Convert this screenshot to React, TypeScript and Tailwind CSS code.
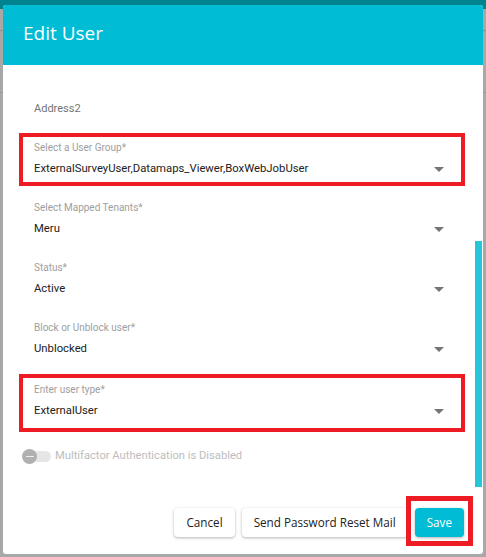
import { ReactNode } from "react"

const FIELDS = [
  { label: "Select a User Group*", value: "ExternalSurveyUser,Datamaps_Viewer,BoxWebJobUser", highlight: "group" },
  { label: "Select Mapped Tenants*", value: "Meru" },
  { label: "Status*", value: "Active" },
  { label: "Block or Unblock user*", value: "Unblocked" },
  { label: "Enter user type*", value: "ExternalUser", highlight: "type" },
]

function Arrow() {
  return (
    <svg width="10" height="5" viewBox="0 0 10 5" className="absolute right-[17px] top-[28px]">
      <path d="M0 0 L10 0 L5 5 Z" fill="#757575" />
    </svg>
  )
}

function SelectField({ label, value, highlight }: { label: string; value: string; highlight?: string }) {
  return (
    <div className={`relative h-[60px] pt-[1px] ${highlight === "type" ? "mt-[2px]" : ""}`}>
      {highlight === "group" && (
        <div className="absolute -left-[15px] -right-[4px] -top-[6px] h-[53px] border-[4px] border-[#ed1c24]" />
      )}
      {highlight === "type" && (
        <div className="absolute -left-[15px] -right-[4px] -top-[7px] h-[58px] border-[4px] border-[#ed1c24]" />
      )}
      <div className="h-[15px] text-[10px] leading-[15px] text-[#9e9e9e]">{label}</div>
      <div className="mt-[4px] h-[20px] text-[11.3px] leading-[20px] text-[#212121]">{value}</div>
      <Arrow />
    </div>
  )
}

function Button({ children, primary }: { children: ReactNode; primary?: boolean }) {
  return (
    <button
      className={`h-[29px] rounded-[4px] px-[12px] text-[11.7px] shadow-[0_1px_3px_rgba(0,0,0,0.3)] ${
        primary ? "bg-[#00bcd4] text-white" : "bg-white text-[#212121]"
      }`}
      style={{ fontFamily: "'Open Sans', sans-serif" }}
    >
      {children}
    </button>
  )
}

export default function App() {
  return (
    <div className="relative h-[557px] w-[486px] overflow-hidden bg-[#a8a8a8]" style={{ fontFamily: "Roboto, sans-serif" }}>
      {/* page behind the overlay */}
      <div className="h-[9px] bg-[#00838f]" />
      <div className="mt-[21px] h-[1px] bg-[#8f8f8f]" />
      <div className="mt-[61px] h-[1px] bg-[#9a9a9a]" />

      {/* dialog */}
      <div className="absolute left-[3px] top-[5px] flex h-[549px] w-[480px] flex-col overflow-hidden rounded-[3px] bg-white">
        <div className="flex h-[60px] shrink-0 items-center bg-[#00bcd4] pb-[4px] pl-[20px]">
          <h1 className="text-[19px] text-white" style={{ fontFamily: "'Open Sans', sans-serif" }}>
            Edit User
          </h1>
        </div>

        <div className="relative flex-1">
          <div className="pl-[31px] pr-[22px] pt-[34px]">
            <div className="h-[20px] text-[11px] leading-[20px] text-[#757575]">Address2</div>
            <div className="mt-[20px]">
              {FIELDS.map((f) => (
                <SelectField key={f.label} {...f} />
              ))}
            </div>

            <div className="mt-[7px] flex items-center gap-[3px] -ml-[12px]">
              <div className="relative h-[15px] w-[30px]">
                <div className="absolute left-[4px] top-[2px] h-[11px] w-[25px] rounded-full bg-[#e6e6e6]" />
                <div className="absolute left-0 top-0 flex h-[15px] w-[15px] items-center justify-center rounded-full bg-[#b0b0b0]">
                  <div className="h-[1px] w-[8px] bg-[#eeeeee]" />
                </div>
              </div>
              <span className="text-[11.2px] text-[#bdbdbd]">Multifactor Authentication is Disabled</span>
            </div>
          </div>

          {/* scrollbar thumb */}
          <div className="absolute right-[1px] top-[176px] h-[246px] w-[7px] bg-[#26c6da]" />
        </div>

        <div className="flex h-[73px] shrink-0 items-start justify-end gap-[7px] pr-[19px] pt-[27px]">
          <Button>Cancel</Button>
          <Button>Send Password Reset Mail</Button>
          <div className="relative">
            <div className="absolute -left-[9px] -right-[9px] -top-[12px] h-[50px] border-[5px] border-[#ed1c24]" />
            <Button primary>Save</Button>
          </div>
        </div>
      </div>
    </div>
  )
}
